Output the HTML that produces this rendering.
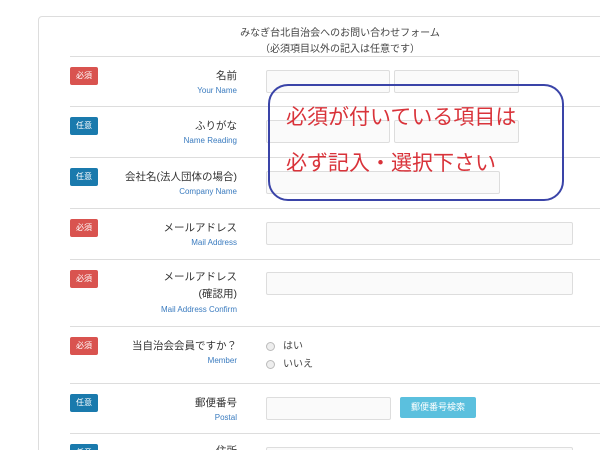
<!DOCTYPE html>
<html style="height:450px;overflow:hidden"><head><meta charset="utf-8"><style>
html,body{margin:0;width:600px;height:450px;overflow:hidden}
body{background:#fff;font-family:"Liberation Sans","Noto Sans CJK JP",sans-serif;position:relative}
.card{position:absolute;left:38px;top:16px;width:580px;height:440px;border:1px solid #ddd;border-radius:4px}
.hr{position:absolute;left:70px;right:0;height:1px;background:#ddd}
.t{position:absolute;left:240px;width:200px;text-align:center;font-size:10px;color:#444}
.b{position:absolute;left:70px;width:28px;height:18px;border-radius:2px;color:#fff;font-size:8px;line-height:18px;text-align:center}
.r{background:#d9534f}.o{background:#1a7aad}
.l{position:absolute;right:363px;text-align:right;font-size:10.5px;color:#333;white-space:nowrap}
.s{position:absolute;right:363px;text-align:right;font-size:8px;color:#3a7bbf;white-space:nowrap}
.i{position:absolute;height:21px;border:1px solid #ddd;border-radius:2px;background:#fafafa}
.rad{position:absolute;left:266px;font-size:10px;color:#444}
.rad span{display:inline-block;width:7px;height:7px;border:1px solid #bbb;border-radius:50%;background:#eee;margin-right:8px;vertical-align:middle}
.ov{position:absolute;left:268px;top:84px;width:292px;height:113px;border:2px solid #3a44a8;border-radius:20px;color:#d9333a;font-size:21px;background:transparent}
.ov div{position:absolute;left:16px;white-space:nowrap}
</style></head><body>
<div class="card"></div>
<div class="t" style="top:24px">みなぎ台北自治会へのお問い合わせフォーム</div>
<div class="t" style="top:40px">（必須項目以外の記入は任意です）</div>
<div class="hr" style="top:56px"></div>
<div class="hr" style="top:106px"></div>
<div class="hr" style="top:157px"></div>
<div class="hr" style="top:208px"></div>
<div class="hr" style="top:259px"></div>
<div class="hr" style="top:326px"></div>
<div class="hr" style="top:383px"></div>
<div class="hr" style="top:433px"></div>

<div class="b r" style="top:67px">必須</div>
<div class="l" style="top:68px">名前</div><div class="s" style="top:86px">Your Name</div>
<div class="i" style="left:266px;top:70px;width:122px"></div><div class="i" style="left:394px;top:70px;width:123px"></div>

<div class="b o" style="top:117px">任意</div>
<div class="l" style="top:118px">ふりがな</div><div class="s" style="top:136px">Name Reading</div>
<div class="i" style="left:266px;top:120px;width:122px"></div><div class="i" style="left:394px;top:120px;width:123px"></div>

<div class="b o" style="top:168px">任意</div>
<div class="l" style="top:169px">会社名(法人団体の場合)</div><div class="s" style="top:187px">Company Name</div>
<div class="i" style="left:266px;top:171px;width:232px"></div>

<div class="b r" style="top:219px">必須</div>
<div class="l" style="top:220px">メールアドレス</div><div class="s" style="top:238px">Mail Address</div>
<div class="i" style="left:266px;top:222px;width:305px"></div>

<div class="b r" style="top:270px">必須</div>
<div class="l" style="top:269px">メールアドレス</div><div class="l" style="top:286px">(確認用)</div><div class="s" style="top:305px">Mail Address Confirm</div>
<div class="i" style="left:266px;top:272px;width:305px"></div>

<div class="b r" style="top:337px">必須</div>
<div class="l" style="top:338px">当自治会会員ですか？</div><div class="s" style="top:356px">Member</div>
<div class="rad" style="top:337px"><span></span>はい</div>
<div class="rad" style="top:355px"><span></span>いいえ</div>

<div class="b o" style="top:394px">任意</div>
<div class="l" style="top:395px">郵便番号</div><div class="s" style="top:413px">Postal</div>
<div class="i" style="left:266px;top:397px;width:123px"></div>
<div style="position:absolute;left:400px;top:397px;width:76px;height:21px;background:#5bc0de;border-radius:2px;color:#fff;font-size:9px;line-height:21px;text-align:center">郵便番号検索</div>

<div class="b o" style="top:444px">任意</div>
<div class="l" style="top:443px">住所</div>
<div class="i" style="left:266px;top:447px;width:305px"></div>

<div class="ov"><div style="top:15px">必須が付いている項目は</div><div style="top:61px">必ず記入・選択下さい</div></div>
</body></html>
